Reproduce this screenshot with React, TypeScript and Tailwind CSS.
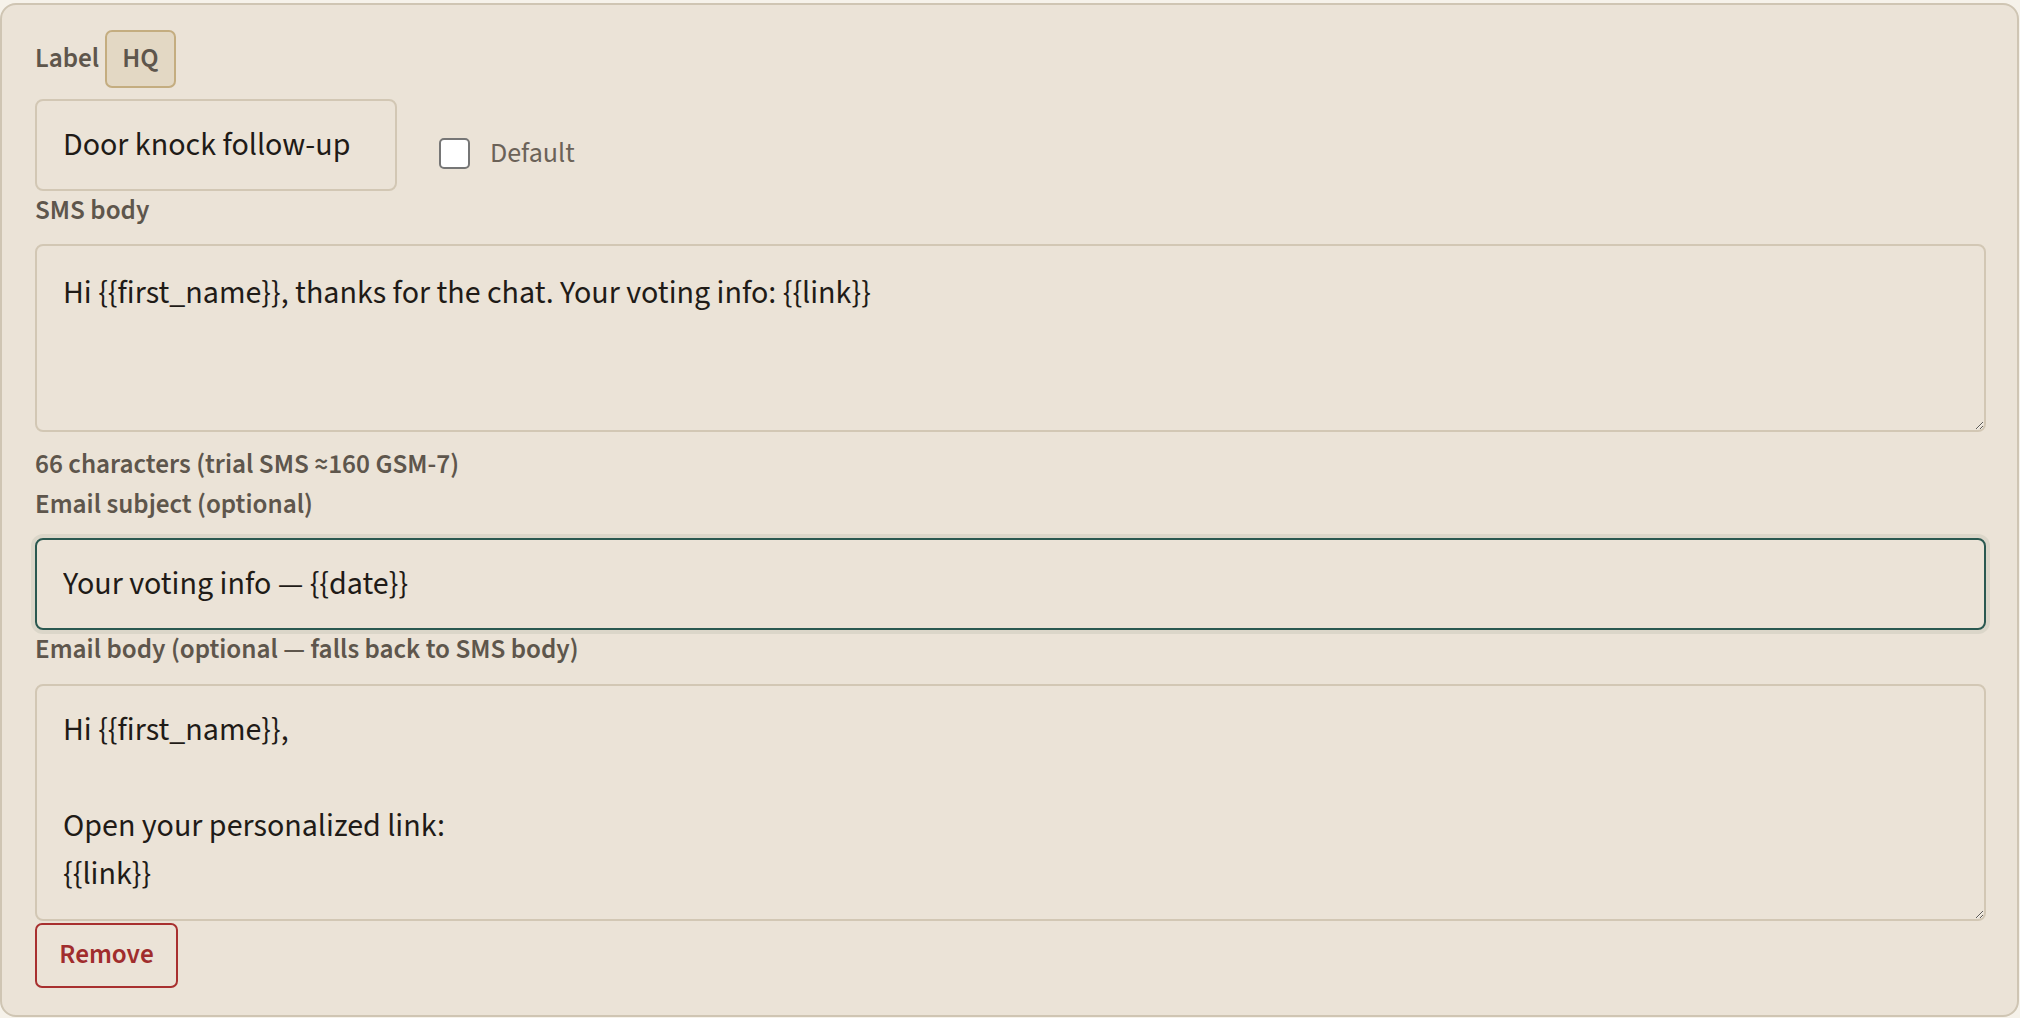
import React from 'react';

const font = { fontFamily: '"Source Sans 3", "Source Sans Pro", Lato, "Noto Sans", sans-serif' };

function FieldLabel({ children, className = '' }: { children: React.ReactNode; className?: string }) {
  return (
    <div className={`text-[27.2px] font-semibold leading-[40px] text-[#5e564c] ${className}`}>{children}</div>
  );
}

export default function App() {
  return (
    <div className="min-h-screen bg-[#f6f2ea] pt-[3px]" style={font}>
      <div className="w-[2019px] rounded-[16px] border-2 border-[#cfc5b3] bg-[#ebe3d7] pl-[33px] pr-[31px] pt-[25px] pb-[27px]">
        {/* label + tag */}
        <div className="flex items-center gap-[6px]">
          <span className="text-[27.2px] font-semibold text-[#5e564c]">Label</span>
          <span className="flex h-[58px] items-center rounded-[7px] border-2 border-[#c4ad80] bg-[#e3d8c4] px-[15px] text-[27.2px] font-semibold text-[#5e564c]">
            HQ
          </span>
        </div>

        <div className="mt-[11px] flex items-start gap-[42px]">
          <input
            readOnly
            defaultValue="Door knock follow-up"
            className="h-[92px] w-[362px] rounded-[8px] border-2 border-[#d2c7b4] bg-transparent px-[26px] text-[32px] text-[#1f1b17] outline-none"
          />
          <label className="mt-[33px] flex items-center gap-[20px]">
            <span className="h-[31px] w-[31px] rounded-[5px] border-2 border-[#767676] bg-white" />
            <span className="text-[28px] text-[#6b6258]">Default</span>
          </label>
        </div>

        <FieldLabel>SMS body</FieldLabel>
        <textarea
          readOnly
          rows={3}
          defaultValue="Hi {{first_name}}, thanks for the chat. Your voting info: {{link}}"
          className="mt-[13px] block h-[188px] w-full rounded-[8px] border-2 border-[#d2c7b4] bg-transparent px-[26px] pt-[23px] pb-[17px] text-[32px] leading-[48px] text-[#1f1b17] outline-none"
        />

        <FieldLabel className="mt-[13px]">66 characters (trial SMS ≈160 GSM-7)</FieldLabel>
        <FieldLabel>Email subject (optional)</FieldLabel>
        <input
          readOnly
          defaultValue="Your voting info — {{date}}"
          className="mt-[13px] block h-[92px] w-full rounded-[8px] border-2 border-[#2a5850] bg-transparent px-[26px] text-[32px] text-[#1f1b17] shadow-[0_0_0_4px_#dbd6c9] outline-none"
        />

        <FieldLabel>Email body (optional — falls back to SMS body)</FieldLabel>
        <textarea
          readOnly
          rows={4}
          defaultValue={'Hi {{first_name}},\n\nOpen your personalized link:\n{{link}}'}
          className="mt-[14px] block h-[237px] w-full rounded-[8px] border-2 border-[#d2c7b4] bg-transparent px-[26px] pt-[20px] pb-[17px] text-[32px] leading-[48px] text-[#1f1b17] outline-none"
        />

        <button className="mt-[2px] flex h-[65px] w-[143px] items-center justify-center rounded-[7px] border-2 border-[#a8302f] text-[27.2px] font-semibold text-[#a02d2d]">
          Remove
        </button>
      </div>
    </div>
  );
}
